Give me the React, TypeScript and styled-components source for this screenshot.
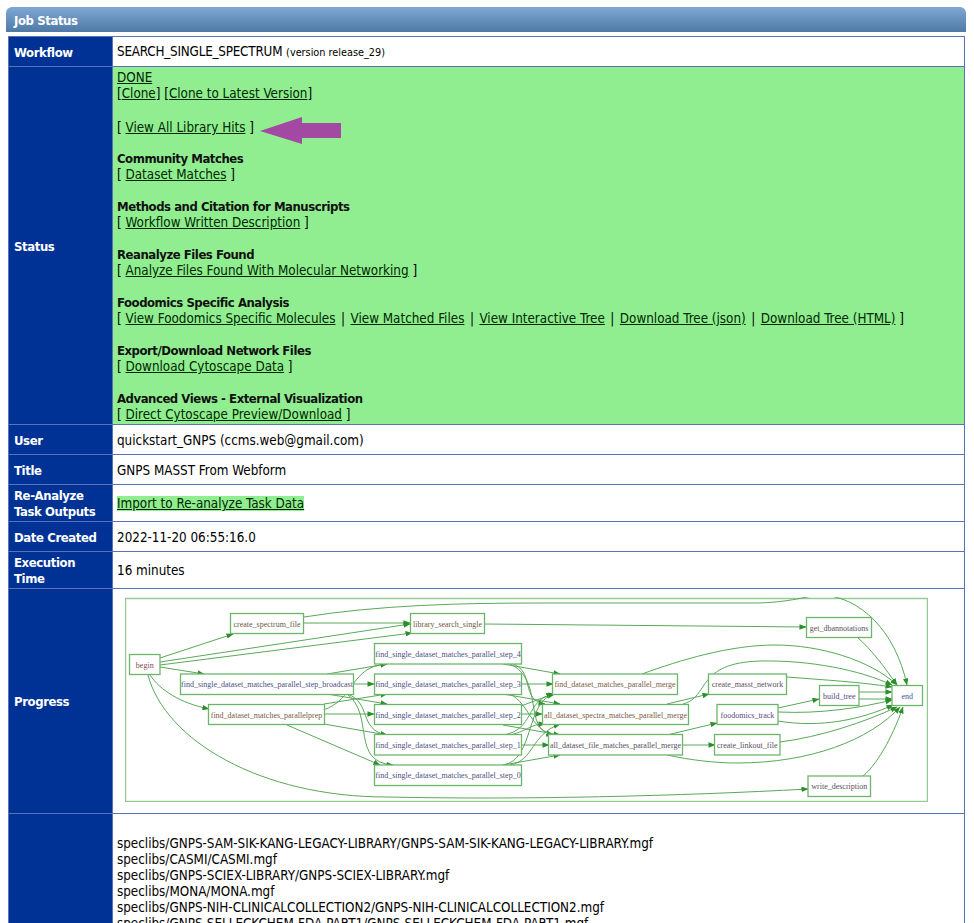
import React from "react";
import styled, { createGlobalStyle } from "styled-components";

const Global = createGlobalStyle`
  html, body { margin: 0; padding: 0; background: #fff; overflow: hidden; height: 923px; }
  body { font-family: "DejaVu Sans Condensed", "DejaVu Sans", sans-serif; font-stretch: condensed; font-size: 13.33px; color: #000; }
`;
const Page = styled.div`
  padding: 7px 8px 0 6px;
  height: 916px;
  overflow: hidden;
`;
const Header = styled.div`
  height: 25px;
  border-radius: 6px 6px 0 0;
  background: linear-gradient(#7fa8d3, #4e7aa5);
  color: #fff;
  font-weight: 700;
  font-size: 13px;
  letter-spacing: -0.4px;
  line-height: 27px;
  padding-left: 8px;
`;
const Table = styled.table`
  margin: 4px 0 0 2px;
  width: 957px;
  border-collapse: collapse;
  table-layout: fixed;
`;
const Label = styled.th`
  width: 104px;
  box-sizing: border-box;
  background: #003296;
  border: 1px solid #5a72b8;
  color: #fff;
  font-weight: 700;
  font-size: 13px;
  letter-spacing: -0.4px;
  line-height: 16px;
  text-align: left;
  padding: 2px 4px 0 5px;
`;
const Value = styled.td<{ $h?: number; $status?: boolean }>`
  border: 1px solid #5a72b8;
  padding: 3px 4px 1px;
  height: ${(p) => (p.$h ? `${p.$h}px` : "auto")};
  box-sizing: border-box;
  line-height: 16px;
  background: ${(p) => (p.$status ? "#90ee90" : "#fff")};
`;
const Link = styled.a`
  color: #002800;
  text-decoration: underline;
`;
const Highlight = styled(Link)`
  background: #90ee90;
`;
const WorkflowName = styled.span`
  letter-spacing: -0.2px;
`;
const Small = styled.span`
  font-size: 10.8px;
`;
const Section = styled.div`
  margin-top: 16px;
`;
const SectionTitle = styled.div`
  font-weight: 700;
  font-size: 13px;
  letter-spacing: -0.47px;
  color: #111;
`;
const Sep = styled.span`
  margin: 0 5.5px;
`;
const HitsLine = styled.div`
  position: relative;
  margin-top: 18px;
  margin-bottom: -1px;
`;
const PurpleArrow = styled.svg`
  position: absolute;
  left: 143px;
  top: -3px;
`;
const GraphWrap = styled.div`
  padding: 0 0 5px 8px;
  line-height: 0;
`;
const GraphSvg = styled.svg`
  display: block;
`;
const Libs = styled.div`
  padding-top: 3px;
  padding-bottom: 60px;
`;

type N = { t: string; x: number; y: number; w: number; h: number; c: string };
const nodes: N[] = [
  { t: "begin", x: 129.5, y: 654.5, w: 30.5, h: 20, c: "#8a4b4b" },
  { t: "create_spectrum_file", x: 230.5, y: 613.5, w: 73, h: 20, c: "#6b5a40" },
  { t: "library_search_single", x: 410.5, y: 613.5, w: 74, h: 20, c: "#6b5a40" },
  { t: "find_single_dataset_matches_parallel_step_4", x: 374.5, y: 643.5, w: 147, h: 20.5, c: "#4b4f80" },
  { t: "find_single_dataset_matches_parallel_step_3", x: 374.5, y: 674, w: 147, h: 20.5, c: "#4b4f80" },
  { t: "find_single_dataset_matches_parallel_step_2", x: 374.5, y: 704.5, w: 147, h: 20, c: "#4b4f80" },
  { t: "find_single_dataset_matches_parallel_step_1", x: 374.5, y: 734.5, w: 147, h: 20.5, c: "#4b4f80" },
  { t: "find_single_dataset_matches_parallel_step_0", x: 374.5, y: 765, w: 147, h: 20.5, c: "#4b4f80" },
  { t: "find_single_dataset_matches_parallel_step_broadcast", x: 180.5, y: 674, w: 173, h: 20.5, c: "#4b4f80" },
  { t: "find_dataset_matches_parallelprep", x: 208.5, y: 704.5, w: 116, h: 20, c: "#7a5a40" },
  { t: "get_dbannotations", x: 806.5, y: 617.5, w: 65, h: 20, c: "#5a4f60" },
  { t: "find_dataset_matches_parallel_merge", x: 552.5, y: 674, w: 125, h: 20.5, c: "#7a5a40" },
  { t: "all_dataset_spectra_matches_parallel_merge", x: 542.5, y: 704.5, w: 146, h: 20, c: "#7a5a40" },
  { t: "all_dataset_file_matches_parallel_merge", x: 548.5, y: 734.5, w: 134, h: 20.5, c: "#5a4f60" },
  { t: "create_masst_network", x: 708.5, y: 674, w: 78, h: 20.5, c: "#5a4f60" },
  { t: "foodomics_track", x: 717, y: 704.5, w: 61, h: 20, c: "#5b3f80" },
  { t: "create_linkout_file", x: 714.5, y: 734.5, w: 65.5, h: 20.5, c: "#5a4f60" },
  { t: "build_tree", x: 819.5, y: 685.5, w: 39.5, h: 20, c: "#5b3f80" },
  { t: "end", x: 892, y: 685.5, w: 30.5, h: 20, c: "#3f55a0" },
  { t: "write_description", x: 808, y: 776, w: 62.5, h: 20.5, c: "#5a4f60" },
];

const edges: string[] = [
  "M160 658L233 634",
  "M160 662L410 624",
  "M160 665L412 633",
  "M160 667L204 674",
  "M150 675C160 690 180 703 209 709",
  "M148 675C165 740 260 797 387 797C520 800 680 796 808 789",
  "M304 623L410 623",
  "M304 617C380 605 460 603 540 603L753 603C790 603 810 595 822 595C860 597 895 630 907 685",
  "M484 624L806 627",
  "M857 637C872 650 885 668 897 685",
  "M327 674L387 664",
  "M353 684L374 684",
  "M327 694L387 704",
  "M347 694C372 702 358 730 387 735",
  "M347 694C375 715 350 762 393 765",
  "M323 710C355 700 350 666 387 664",
  "M324 704L387 694",
  "M325 714L374 714",
  "M324 724L387 735",
  "M287 725L380 765",
  "M503 664L560 674",
  "M513 664C535 672 520 700 545 704",
  "M510 664C545 680 522 730 553 735",
  "M521 684L553 684",
  "M503 694L560 704",
  "M510 694C530 705 530 728 553 735",
  "M521 706L553 694",
  "M521 714L542 714",
  "M503 725L560 735",
  "M503 735C535 730 525 700 553 694",
  "M521 745L549 745",
  "M510 735C530 730 530 724 545 724",
  "M503 765C535 760 525 700 555 694",
  "M510 765C535 760 530 735 560 724",
  "M503 765L560 755",
  "M642 674C680 660 730 645 775 645C820 645 870 660 897 685",
  "M667 704L709 694",
  "M683 704C710 697 695 663 760 661C810 660 860 670 892 685",
  "M787 677C825 680 860 682 892 687",
  "M859 692L892 692",
  "M859 699L892 699",
  "M778 708L819 699",
  "M778 712C820 714 860 708 892 700",
  "M778 721C820 728 860 720 893 705",
  "M667 735L717 723",
  "M682 745L715 745",
  "M780 742C820 737 865 722 897 707",
  "M667 755C690 760 715 763 737 763C810 763 870 740 900 707",
  "M863 776C880 762 895 730 903 707",
];

const Graph = () => (
  <GraphSvg width="803" height="205" viewBox="125 597 803 205">
    <defs>
      <marker id="ah" viewBox="0 0 10 8" refX="9.5" refY="4" markerWidth="7" markerHeight="5.5" markerUnits="userSpaceOnUse" orient="auto">
        <path d="M0 0L10 4L0 8Z" fill="#2a8f2a" />
      </marker>
    </defs>
    <rect x="125.5" y="598.5" width="802" height="203" fill="#fff" stroke="#93c993" strokeWidth="1.4" />
    {edges.map((d) => (
      <path key={d} d={d} fill="none" stroke="#5aa85a" strokeWidth="1" markerEnd="url(#ah)" />
    ))}
    {nodes.map((n) => (
      <g key={n.t}>
        <rect x={n.x} y={n.y} width={n.w} height={n.h} fill="#fff" stroke="#6db56d" strokeWidth="1.3" />
        <text
          x={n.x + n.w / 2}
          y={n.y + n.h / 2 + 3}
          textAnchor="middle"
          fontFamily='"Liberation Serif", serif'
          fontSize="8"
          fill={n.c}
        >
          {n.t}
        </text>
      </g>
    ))}
  </GraphSvg>
);

const libs = [
  "speclibs/GNPS-SAM-SIK-KANG-LEGACY-LIBRARY/GNPS-SAM-SIK-KANG-LEGACY-LIBRARY.mgf",
  "speclibs/CASMI/CASMI.mgf",
  "speclibs/GNPS-SCIEX-LIBRARY/GNPS-SCIEX-LIBRARY.mgf",
  "speclibs/MONA/MONA.mgf",
  "speclibs/GNPS-NIH-CLINICALCOLLECTION2/GNPS-NIH-CLINICALCOLLECTION2.mgf",
  "speclibs/GNPS-SELLECKCHEM-FDA-PART1/GNPS-SELLECKCHEM-FDA-PART1.mgf",
];

export default function App() {
  return (
    <Page>
      <Global />
      <Header>Job Status</Header>
      <Table>
        <tbody>
          <tr>
            <Label>Workflow</Label>
            <Value $h={30}>
              <WorkflowName>SEARCH_SINGLE_SPECTRUM</WorkflowName> <Small>(version release_29)</Small>
            </Value>
          </tr>
          <tr>
            <Label>Status</Label>
            <Value $status>
              <Link>DONE</Link>
              <br />[<Link>Clone</Link>] [<Link>Clone to Latest Version</Link>]
              <HitsLine>
                [ <Link>View All Library Hits</Link> ]
                <PurpleArrow width="82" height="28" viewBox="0 0 82 28">
                  <path d="M0 14L42 0V6H81V21H42V27Z" fill="#a349a4" />
                </PurpleArrow>
              </HitsLine>
              <Section>
                <SectionTitle>Community Matches</SectionTitle>[ <Link>Dataset Matches</Link> ]
              </Section>
              <Section>
                <SectionTitle>Methods and Citation for Manuscripts</SectionTitle>[ <Link>Workflow Written Description</Link> ]
              </Section>
              <Section>
                <SectionTitle>Reanalyze Files Found</SectionTitle>[ <Link>Analyze Files Found With Molecular Networking</Link> ]
              </Section>
              <Section>
                <SectionTitle>Foodomics Specific Analysis</SectionTitle>[ <Link>View Foodomics Specific Molecules</Link>
                <Sep>|</Sep>
                <Link>View Matched Files</Link>
                <Sep>|</Sep>
                <Link>View Interactive Tree</Link>
                <Sep>|</Sep>
                <Link>Download Tree (json)</Link>
                <Sep>|</Sep>
                <Link>Download Tree (HTML)</Link> ]
              </Section>
              <Section>
                <SectionTitle>Export/Download Network Files</SectionTitle>[ <Link>Download Cytoscape Data</Link> ]
              </Section>
              <Section>
                <SectionTitle>Advanced Views - External Visualization</SectionTitle>[ <Link>Direct Cytoscape Preview/Download</Link> ]
              </Section>
            </Value>
          </tr>
          <tr>
            <Label>User</Label>
            <Value $h={30}>quickstart_GNPS (ccms.web@gmail.com)</Value>
          </tr>
          <tr>
            <Label>Title</Label>
            <Value $h={30}>GNPS MASST From Webform</Value>
          </tr>
          <tr>
            <Label>
              Re-Analyze
              <br />
              Task Outputs
            </Label>
            <Value $h={37}>
              <Highlight>Import to Re-analyze Task Data</Highlight>
            </Value>
          </tr>
          <tr>
            <Label>Date Created</Label>
            <Value $h={30}>2022-11-20 06:55:16.0</Value>
          </tr>
          <tr>
            <Label>
              Execution
              <br />
              Time
            </Label>
            <Value $h={37}>16 minutes</Value>
          </tr>
          <tr>
            <Label>Progress</Label>
            <Value $h={225}>
              <GraphWrap>
                <Graph />
              </GraphWrap>
            </Value>
          </tr>
          <tr>
            <Label />
            <Value>
              <Libs>
                <br />
                {libs.map((l) => (
                  <div key={l}>{l}</div>
                ))}
              </Libs>
            </Value>
          </tr>
        </tbody>
      </Table>
    </Page>
  );
}
